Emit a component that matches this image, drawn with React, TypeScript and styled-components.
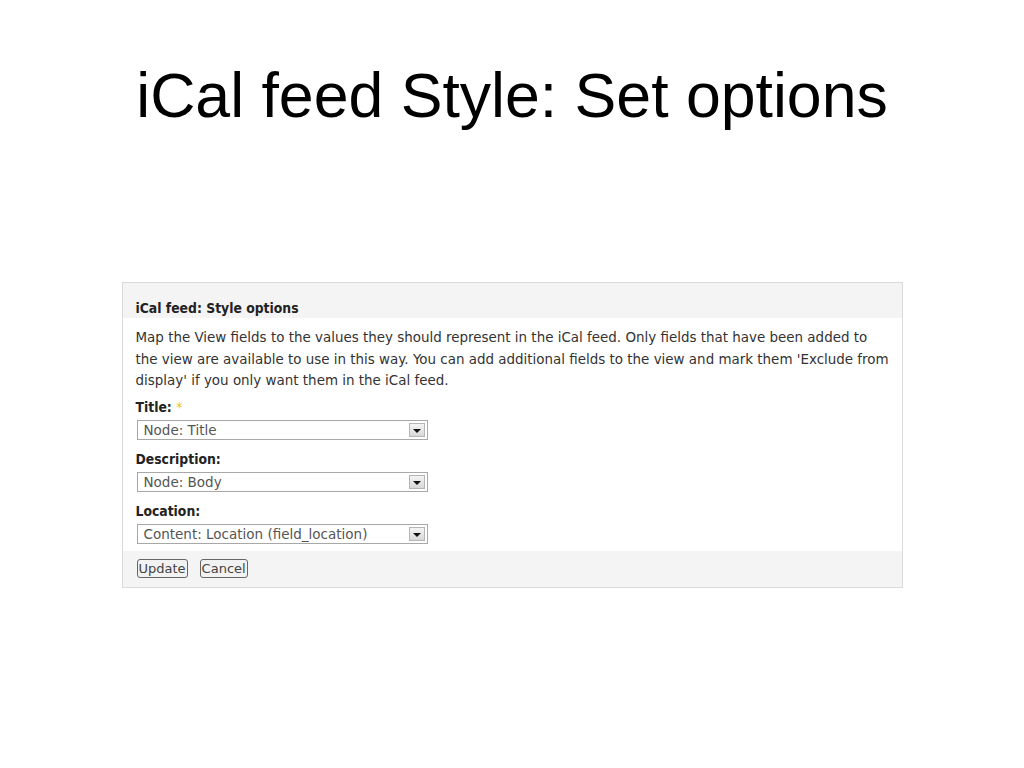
import React from 'react';
import styled, { createGlobalStyle } from 'styled-components';

const GlobalStyle = createGlobalStyle`
  html, body {
    margin: 0;
    padding: 0;
    background: #ffffff;
  }
`;

const Page = styled.div`
  width: 1024px;
  height: 768px;
  display: flex;
  flex-direction: column;
  align-items: center;
  box-sizing: border-box;
  padding-top: 64px;
`;

const SlideTitle = styled.h1`
  margin: 0;
  font-family: 'Liberation Sans', Arial, sans-serif;
  font-weight: 400;
  font-size: 62.6px;
  line-height: 63px;
  color: #000;
`;

const Panel = styled.div`
  margin-top: 155px;
  width: 781px;
  border: 1px solid #dadada;
  box-sizing: border-box;
  font-family: 'DejaVu Sans', Tahoma, sans-serif;
  font-size: 13.45px;
  color: #333;
`;

const boldFont = `
  font-family: 'DejaVu Sans Condensed', 'DejaVu Sans', Tahoma, sans-serif;
  font-weight: 700;
  font-size: 13.8px;
  color: #222;
`;

const PanelHeader = styled.div`
  ${boldFont}
  background: #f4f4f4;
  padding: 16px 13px 3px;
  height: 35px;
  box-sizing: border-box;
  line-height: 18px;
`;

const PanelBody = styled.div`
  background: #fff;
  padding: 9px 13px 7px;
`;

const Intro = styled.p`
  margin: 0;
  line-height: 21.5px;
  white-space: nowrap;
`;

const Field = styled.div<{ $first?: boolean }>`
  display: flex;
  flex-direction: column;
  align-items: flex-start;
  margin-top: ${(p) => (p.$first ? '6px' : '10px')};
`;

const Label = styled.label`
  ${boldFont}
  line-height: 18px;
  margin-bottom: 4px;
`;

const Required = styled.span`
  color: #f0c020;
  font-weight: 400;
`;

const SelectBox = styled.div`
  width: 291px;
  height: 20px;
  box-sizing: border-box;
  border: 1px solid #a8a8a8;
  margin-left: 1px;
  display: flex;
  align-items: center;
  justify-content: space-between;
  font-size: 13.5px;
  color: #555;
  padding-left: 6px;
  background: #fff;
`;

const Arrow = styled.span`
  width: 16px;
  height: 14px;
  margin-right: 2px;
  box-sizing: border-box;
  border: 1px solid #b5b5b5;
  background: linear-gradient(#f4f4f4, #d8d8d8);
  display: flex;
  align-items: center;
  justify-content: center;

  &::after {
    content: '';
    border-left: 4px solid transparent;
    border-right: 4px solid transparent;
    border-top: 4px solid #111;
    margin-top: 2px;
  }
`;

const PanelFooter = styled.div`
  background: #f4f4f4;
  height: 36px;
  padding: 0 14px;
  display: flex;
  align-items: center;
  gap: 12px;
`;

const Button = styled.button`
  font-family: 'DejaVu Sans', Tahoma, sans-serif;
  font-size: 13px;
  color: #444;
  background: #f2f2f2;
  border: 1px solid #666;
  border-radius: 3px;
  padding: 0 1px;
  height: 19px;
  line-height: 17px;
  cursor: pointer;
`;

const fields = [
  { label: 'Title:', value: 'Node: Title', required: true },
  { label: 'Description:', value: 'Node: Body' },
  { label: 'Location:', value: 'Content: Location (field_location)' },
];

const App = () => (
  <>
    <GlobalStyle />
    <Page>
      <SlideTitle>iCal feed Style: Set options</SlideTitle>
      <Panel>
        <PanelHeader>iCal feed: Style options</PanelHeader>
        <PanelBody>
          <Intro>
            Map the View fields to the values they should represent in the iCal feed. Only fields that have been added to
            <br />
            the view are available to use in this way. You can add additional fields to the view and mark them 'Exclude from
            <br />
            display' if you only want them in the iCal feed.
          </Intro>
          {fields.map((f, i) => (
            <Field key={f.label} $first={i === 0}>
              <Label>
                {f.label} {f.required && <Required>*</Required>}
              </Label>
              <SelectBox>
                {f.value}
                <Arrow />
              </SelectBox>
            </Field>
          ))}
        </PanelBody>
        <PanelFooter>
          <Button>Update</Button>
          <Button>Cancel</Button>
        </PanelFooter>
      </Panel>
    </Page>
  </>
);

export default App;
